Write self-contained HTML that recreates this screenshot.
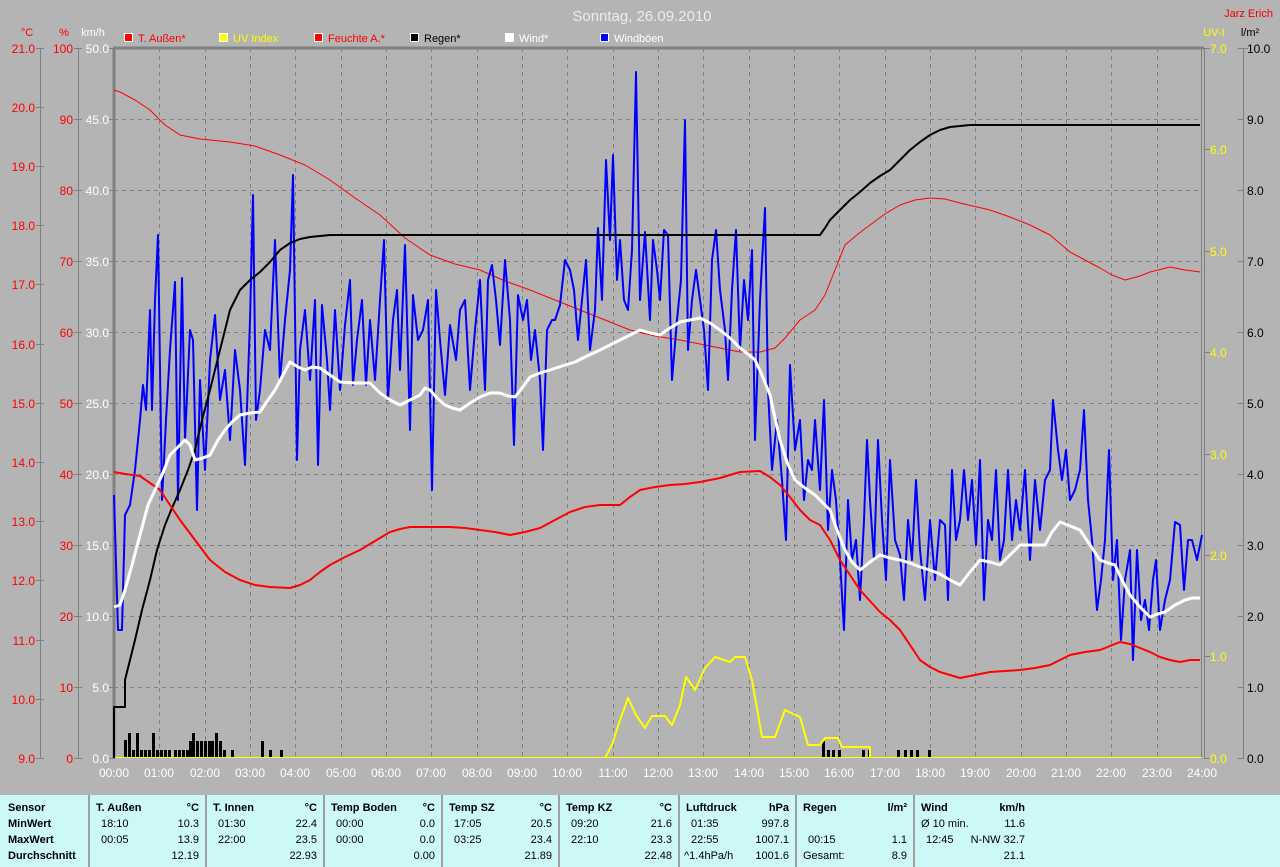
<!DOCTYPE html>
<html><head><meta charset="utf-8"><style>
body{margin:0;width:1280px;height:867px;background:#b4b4b4;overflow:hidden;font-family:"Liberation Sans",Arial,sans-serif;position:relative}
svg{position:absolute;left:0;top:0}
#tbl{position:absolute;left:0;top:795px;width:1280px;height:72px;background:#ccf8f8;font-size:11px;color:#000}
.c{position:absolute;top:0;height:72px;border-left:2px solid #a0a0a0}
.t{position:absolute;white-space:nowrap}
.b{font-weight:bold}
.r{text-align:right}
</style></head><body>
<svg width="1280" height="795" font-family="Liberation Sans, Arial, sans-serif" font-size="12">
<text x="642" y="21" fill="#ececec" font-size="15" text-anchor="middle">Sonntag, 26.09.2010</text>
<text x="1273" y="17" fill="#f00000" font-size="11" text-anchor="end">Jarz Erich</text>
<g font-size="11">
<rect x="124.5" y="33.5" width="8" height="8" fill="#f00" stroke="#fff"/><text x="138" y="42" fill="#f00">T. Außen*</text>
<rect x="219.5" y="33.5" width="8" height="8" fill="#ff0" stroke="#fff"/><text x="233" y="42" fill="#ff0">UV Index</text>
<rect x="314.5" y="33.5" width="8" height="8" fill="#f00" stroke="#fff"/><text x="328" y="42" fill="#f00">Feuchte A.*</text>
<rect x="410.5" y="33.5" width="8" height="8" fill="#000" stroke="#fff"/><text x="424" y="42" fill="#000">Regen*</text>
<rect x="505.5" y="33.5" width="8" height="8" fill="#fff" stroke="#fff"/><text x="519" y="42" fill="#fff">Wind*</text>
<rect x="600.5" y="33.5" width="8" height="8" fill="#00f" stroke="#fff"/><text x="614" y="42" fill="#fff">Windböen</text>
<text x="27" y="36" fill="#f00" text-anchor="middle">°C</text>
<text x="64" y="36" fill="#f00" text-anchor="middle">%</text>
<text x="93" y="36" fill="#fff" text-anchor="middle">km/h</text>
<text x="1214" y="36" fill="#ff0" text-anchor="middle">UV-I</text>
<text x="1250" y="36" fill="#000" text-anchor="middle">l/m²</text>
</g>
<g stroke="#808080" stroke-dasharray="4,4" stroke-width="1">
<path d="M114 119.5H1202M114 190.5H1202M114 261.5H1202M114 332.5H1202M114 403.5H1202M114 474.5H1202M114 545.5H1202M114 616.5H1202M114 687.5H1202"/>
<path d="M159.5 48V758M205.5 48V758M250.5 48V758M295.5 48V758M341.5 48V758M386.5 48V758M431.5 48V758M477.5 48V758M522.5 48V758M567.5 48V758M613.5 48V758M658.5 48V758M703.5 48V758M749.5 48V758M794.5 48V758M839.5 48V758M885.5 48V758M930.5 48V758M975.5 48V758M1021.5 48V758M1066.5 48V758M1111.5 48V758M1157.5 48V758"/>
</g>
<g stroke="#808080" fill="none">
<path d="M113 48H1204M114 48V759" stroke-width="3"/>
<path d="M1201.5 48V759M1204.5 48V759" stroke-width="1"/>
<path d="M40.5 48V758M78.5 48V758M1243.5 48V758"/>
<path d="M36 48.5h8M36 107.5h8M36 166.5h8M36 225.5h8M36 284.5h8M36 344.5h8M36 403.5h8M36 462.5h8M36 521.5h8M36 580.5h8M36 640.5h8M36 699.5h8M36 758.5h8"/>
<path d="M74 48.5h8M74 119.5h8M74 190.5h8M74 261.5h8M74 332.5h8M74 403.5h8M74 474.5h8M74 545.5h8M74 616.5h8M74 687.5h8M74 758.5h8"/>
<path d="M109 48.5h5M109 119.5h5M109 190.5h5M109 261.5h5M109 332.5h5M109 403.5h5M109 474.5h5M109 545.5h5M109 616.5h5M109 687.5h5M109 758.5h5"/>
<path d="M1204 48.5h6M1204 149.5h6M1204 251.5h6M1204 352.5h6M1204 454.5h6M1204 555.5h6M1204 656.5h6M1204 758.5h6"/>
<path d="M1238 48.5h10M1238 119.5h6M1238 190.5h6M1238 261.5h6M1238 332.5h6M1238 403.5h6M1238 474.5h6M1238 545.5h6M1238 616.5h6M1238 687.5h6M1238 758.5h6"/>
</g>
<g font-size="12" text-anchor="end" fill="#f00">
<text x="35" y="53">21.0</text><text x="35" y="112">20.0</text><text x="35" y="171">19.0</text><text x="35" y="230">18.0</text><text x="35" y="289">17.0</text><text x="35" y="349">16.0</text><text x="35" y="408">15.0</text><text x="35" y="467">14.0</text><text x="35" y="526">13.0</text><text x="35" y="585">12.0</text><text x="35" y="645">11.0</text><text x="35" y="704">10.0</text><text x="35" y="763">9.0</text>
<text x="73" y="53">100</text><text x="73" y="124">90</text><text x="73" y="195">80</text><text x="73" y="266">70</text><text x="73" y="337">60</text><text x="73" y="408">50</text><text x="73" y="479">40</text><text x="73" y="550">30</text><text x="73" y="621">20</text><text x="73" y="692">10</text><text x="73" y="763">0</text>
</g>
<g font-size="12" text-anchor="end" fill="#fff">
<text x="109" y="53">50.0</text><text x="109" y="124">45.0</text><text x="109" y="195">40.0</text><text x="109" y="266">35.0</text><text x="109" y="337">30.0</text><text x="109" y="408">25.0</text><text x="109" y="479">20.0</text><text x="109" y="550">15.0</text><text x="109" y="621">10.0</text><text x="109" y="692">5.0</text><text x="109" y="763">0.0</text>
</g>
<g font-size="12" fill="#ff0">
<text x="1210" y="53">7.0</text><text x="1210" y="154">6.0</text><text x="1210" y="256">5.0</text><text x="1210" y="357">4.0</text><text x="1210" y="459">3.0</text><text x="1210" y="560">2.0</text><text x="1210" y="661">1.0</text><text x="1210" y="763">0.0</text>
</g>
<g font-size="12" fill="#000">
<text x="1247" y="53">10.0</text><text x="1247" y="124">9.0</text><text x="1247" y="195">8.0</text><text x="1247" y="266">7.0</text><text x="1247" y="337">6.0</text><text x="1247" y="408">5.0</text><text x="1247" y="479">4.0</text><text x="1247" y="550">3.0</text><text x="1247" y="621">2.0</text><text x="1247" y="692">1.0</text><text x="1247" y="763">0.0</text>
</g>
<g font-size="12" fill="#fff" text-anchor="middle">
<text x="114" y="777">00:00</text><text x="159" y="777">01:00</text><text x="205" y="777">02:00</text><text x="250" y="777">03:00</text><text x="295" y="777">04:00</text><text x="341" y="777">05:00</text><text x="386" y="777">06:00</text><text x="431" y="777">07:00</text><text x="477" y="777">08:00</text><text x="522" y="777">09:00</text><text x="567" y="777">10:00</text><text x="613" y="777">11:00</text><text x="658" y="777">12:00</text><text x="703" y="777">13:00</text><text x="749" y="777">14:00</text><text x="794" y="777">15:00</text><text x="839" y="777">16:00</text><text x="885" y="777">17:00</text><text x="930" y="777">18:00</text><text x="975" y="777">19:00</text><text x="1021" y="777">20:00</text><text x="1066" y="777">21:00</text><text x="1111" y="777">22:00</text><text x="1157" y="777">23:00</text><text x="1202" y="777">24:00</text>
</g>
<g fill="#000">
<rect x="124" y="740" width="3" height="18"/><rect x="128" y="733" width="3" height="25"/><rect x="132" y="750" width="3" height="8"/><rect x="136" y="733" width="3" height="25"/><rect x="140" y="750" width="3" height="8"/><rect x="144" y="750" width="3" height="8"/><rect x="148" y="750" width="3" height="8"/><rect x="152" y="733" width="3" height="25"/><rect x="156" y="750" width="3" height="8"/><rect x="160" y="750" width="3" height="8"/><rect x="164" y="750" width="3" height="8"/><rect x="168" y="750" width="3" height="8"/><rect x="174" y="750" width="3" height="8"/><rect x="178" y="750" width="3" height="8"/><rect x="182" y="750" width="3" height="8"/><rect x="186" y="750" width="3" height="8"/><rect x="189" y="741" width="3" height="17"/><rect x="192" y="733" width="3" height="25"/><rect x="196" y="741" width="3" height="17"/><rect x="200" y="741" width="3" height="17"/><rect x="204" y="741" width="3" height="17"/><rect x="208" y="741" width="3" height="17"/><rect x="211" y="741" width="3" height="17"/><rect x="215" y="733" width="3" height="25"/><rect x="219" y="741" width="3" height="17"/><rect x="223" y="750" width="3" height="8"/><rect x="231" y="750" width="3" height="8"/><rect x="261" y="741" width="3" height="17"/><rect x="269" y="750" width="3" height="8"/><rect x="280" y="750" width="3" height="8"/>
<rect x="822" y="741" width="3" height="17"/><rect x="827" y="750" width="3" height="8"/><rect x="832" y="750" width="3" height="8"/><rect x="838" y="750" width="3" height="8"/><rect x="862" y="750" width="3" height="8"/><rect x="868" y="750" width="3" height="8"/><rect x="897" y="750" width="3" height="8"/><rect x="904" y="750" width="3" height="8"/><rect x="910" y="750" width="3" height="8"/><rect x="916" y="750" width="3" height="8"/><rect x="928" y="750" width="3" height="8"/>
</g>
<path d="M114 757.5H1202" stroke="#ff0" stroke-width="1"/>
<g fill="none" stroke-linejoin="round">
<polyline stroke="#f00" stroke-width="1" points="114,90 120,92 135,100 150,110 165,125 180,135 200,139 230,142 255,146 280,155 305,165 330,180 355,198 380,215 405,238 430,255 455,264 480,270 505,281 530,290 555,300 580,310 605,320 630,330 655,336 680,340 700,344 720,348 740,352 760,352 775,348 785,338 800,320 815,310 825,295 835,270 845,245 858,234 870,225 885,214 900,205 915,200 930,198 945,199 960,203 990,210 1010,217 1030,225 1050,235 1070,252 1085,260 1100,268 1112,275 1125,280 1140,276 1150,272 1170,267 1185,270 1200,272"/>
<polyline stroke="#ff0" stroke-width="2" points="605,758 612,745 620,720 628,698 636,715 645,728 652,716 665,716 672,725 680,705 686,677 695,690 705,668 715,657 730,662 735,657 745,657 752,680 762,737 775,737 785,710 800,717 808,745 820,745 825,738 838,738 842,747 870,747 870,758"/>
<polyline stroke="#00f" stroke-width="2" points="114,495 118,630 122,630 125,515 130,505 135,470 140,420 143,385 146,410 150,310 152,410 155,300 158,235 162,500 166,420 170,350 175,282 178,500 182,278 185,440 190,330 193,340 197,510 200,380 205,470 210,360 215,315 220,400 225,370 230,440 235,350 240,390 245,465 250,320 253,195 256,420 260,390 265,330 270,350 275,240 280,380 285,320 290,270 293,175 297,460 300,350 305,310 310,380 315,300 318,465 322,305 327,360 330,410 335,310 340,390 345,325 350,280 353,385 357,340 362,300 366,385 370,320 375,380 380,300 384,240 388,400 393,320 397,290 400,370 405,245 410,430 413,295 418,340 423,330 428,300 432,490 436,290 440,340 445,395 450,325 456,360 460,310 465,300 470,390 475,330 480,280 485,390 488,280 492,265 496,300 500,345 505,260 510,320 514,445 518,295 523,320 527,300 531,360 535,330 540,380 543,450 547,330 552,320 555,320 560,305 565,260 570,270 574,290 578,340 582,300 586,260 590,350 595,310 598,228 602,300 606,160 610,240 613,155 617,280 620,240 624,300 628,310 632,250 636,72 640,300 645,232 650,320 653,240 657,270 660,300 664,230 668,235 672,380 677,320 681,280 685,120 688,350 692,300 696,270 700,300 704,330 708,390 712,260 716,230 720,290 725,330 728,380 732,290 736,230 740,350 744,280 748,320 752,250 755,440 760,300 765,208 768,390 772,470 777,420 782,480 786,540 790,365 795,450 800,420 804,500 808,460 812,470 815,420 820,490 824,400 828,530 832,470 836,500 840,560 844,630 848,500 852,560 856,540 860,600 864,520 867,440 870,500 874,560 878,440 882,520 886,580 890,460 895,540 900,555 904,600 908,520 912,560 916,480 920,550 925,600 930,520 935,580 940,520 945,525 948,600 952,470 956,540 960,520 964,470 968,520 972,480 976,545 980,460 984,600 988,520 992,540 996,470 1000,560 1004,540 1008,470 1012,540 1016,500 1020,530 1025,470 1030,560 1035,480 1040,530 1045,480 1050,470 1053,400 1058,450 1062,480 1066,450 1070,500 1075,490 1080,470 1084,410 1088,500 1092,540 1097,610 1101,580 1105,540 1109,450 1113,580 1117,540 1121,640 1125,580 1130,550 1133,660 1137,550 1141,620 1145,600 1149,630 1153,580 1156,560 1160,630 1165,600 1170,580 1175,522 1180,525 1184,590 1188,540 1192,540 1197,560 1202,535"/>
<polyline stroke="#000" stroke-width="2" points="114,758 114,707 125,707 125,680 130,660 135,640 142,610 150,580 157,550 165,525 172,508 180,490 188,470 195,450 202,420 210,390 220,350 230,310 240,290 250,280 260,272 270,262 280,250 290,243 300,239 310,237 330,235 340,235 820,235 825,228 830,220 840,210 850,200 860,192 870,183 880,176 890,170 900,160 910,150 920,142 930,135 940,130 950,127 960,126 970,125 1200,125"/>
<polyline stroke="#f00" stroke-width="2" points="114,472 125,474 140,476 150,483 160,490 170,505 180,520 195,540 210,560 225,572 240,580 255,585 270,587 290,588 300,585 310,580 320,572 330,565 345,557 360,550 375,541 390,532 400,529 410,527 430,527 450,527 465,528 480,530 495,532 510,535 525,532 540,528 555,520 570,512 585,507 600,505 620,505 630,497 640,490 655,487 670,485 685,484 700,482 720,478 740,472 760,471 770,477 780,485 790,497 800,510 810,520 820,525 830,540 840,560 850,575 860,590 870,601 880,612 890,620 900,630 910,645 920,660 930,667 940,672 950,675 960,678 975,675 990,672 1005,671 1020,670 1035,668 1050,665 1060,660 1070,655 1085,652 1100,650 1110,646 1120,642 1130,644 1140,648 1150,652 1160,657 1170,660 1180,662 1190,660 1200,660"/>
<polyline stroke="#fff" stroke-width="3" points="114,607 120,605 125,590 132,565 140,535 148,505 155,490 162,475 170,455 178,447 185,440 190,445 195,460 203,458 210,455 218,440 225,430 232,422 240,415 250,413 260,412 268,400 275,390 283,375 290,362 298,367 305,370 312,367 320,368 330,375 340,382 355,383 370,383 375,388 380,393 390,400 400,405 410,400 420,395 425,388 430,390 437,398 445,405 452,408 460,410 470,403 480,397 490,393 500,393 508,396 515,397 522,388 530,377 540,373 550,370 562,366 575,362 587,356 600,350 610,345 620,340 630,335 640,330 650,333 660,335 670,328 680,322 690,320 700,318 710,323 720,330 730,338 740,348 748,354 755,360 762,375 770,395 775,418 780,440 787,462 795,480 805,488 815,495 822,502 830,510 837,530 845,550 852,562 860,570 870,562 880,555 890,558 900,560 910,563 920,567 930,570 940,574 950,580 960,585 970,572 980,560 990,562 1000,565 1010,555 1020,545 1032,545 1045,545 1052,532 1060,522 1070,526 1080,530 1090,545 1100,560 1108,563 1115,565 1122,580 1130,595 1140,607 1150,617 1158,614 1165,612 1175,605 1185,600 1192,598 1200,598"/>
</g>
</svg>
<div id="tbl">
<div class="t b" style="left:8px;top:7px">Sensor</div>
<div class="t b" style="left:8px;top:23px">MinWert</div>
<div class="t b" style="left:8px;top:39px">MaxWert</div>
<div class="t b" style="left:8px;top:55px">Durchschnitt</div>

<div class="c" style="left:88px;width:115px">
<div class="t b" style="left:6px;top:7px">T. Außen</div><div class="t b" style="right:6px;top:7px">°C</div>
<div class="t" style="left:11px;top:23px">18:10</div><div class="t" style="right:6px;top:23px">10.3</div>
<div class="t" style="left:11px;top:39px">00:05</div><div class="t" style="right:6px;top:39px">13.9</div>
<div class="t" style="right:6px;top:55px">12.19</div></div>

<div class="c" style="left:205px;width:116px">
<div class="t b" style="left:6px;top:7px">T. Innen</div><div class="t b" style="right:6px;top:7px">°C</div>
<div class="t" style="left:11px;top:23px">01:30</div><div class="t" style="right:6px;top:23px">22.4</div>
<div class="t" style="left:11px;top:39px">22:00</div><div class="t" style="right:6px;top:39px">23.5</div>
<div class="t" style="right:6px;top:55px">22.93</div></div>

<div class="c" style="left:323px;width:116px">
<div class="t b" style="left:6px;top:7px">Temp Boden</div><div class="t b" style="right:6px;top:7px">°C</div>
<div class="t" style="left:11px;top:23px">00:00</div><div class="t" style="right:6px;top:23px">0.0</div>
<div class="t" style="left:11px;top:39px">00:00</div><div class="t" style="right:6px;top:39px">0.0</div>
<div class="t" style="right:6px;top:55px">0.00</div></div>

<div class="c" style="left:441px;width:115px">
<div class="t b" style="left:6px;top:7px">Temp SZ</div><div class="t b" style="right:6px;top:7px">°C</div>
<div class="t" style="left:11px;top:23px">17:05</div><div class="t" style="right:6px;top:23px">20.5</div>
<div class="t" style="left:11px;top:39px">03:25</div><div class="t" style="right:6px;top:39px">23.4</div>
<div class="t" style="right:6px;top:55px">21.89</div></div>

<div class="c" style="left:558px;width:118px">
<div class="t b" style="left:6px;top:7px">Temp KZ</div><div class="t b" style="right:6px;top:7px">°C</div>
<div class="t" style="left:11px;top:23px">09:20</div><div class="t" style="right:6px;top:23px">21.6</div>
<div class="t" style="left:11px;top:39px">22:10</div><div class="t" style="right:6px;top:39px">23.3</div>
<div class="t" style="right:6px;top:55px">22.48</div></div>

<div class="c" style="left:678px;width:115px">
<div class="t b" style="left:6px;top:7px">Luftdruck</div><div class="t b" style="right:6px;top:7px">hPa</div>
<div class="t" style="left:11px;top:23px">01:35</div><div class="t" style="right:6px;top:23px">997.8</div>
<div class="t" style="left:11px;top:39px">22:55</div><div class="t" style="right:6px;top:39px">1007.1</div>
<div class="t" style="left:4px;top:55px">^1.4hPa/h</div><div class="t" style="right:6px;top:55px">1001.6</div></div>

<div class="c" style="left:795px;width:116px">
<div class="t b" style="left:6px;top:7px">Regen</div><div class="t b" style="right:6px;top:7px">l/m²</div>
<div class="t" style="left:11px;top:39px">00:15</div><div class="t" style="right:6px;top:39px">1.1</div>
<div class="t" style="left:6px;top:55px">Gesamt:</div><div class="t" style="right:6px;top:55px">8.9</div></div>

<div class="c" style="left:913px;width:110px">
<div class="t b" style="left:6px;top:7px">Wind</div><div class="t b" style="right:0px;top:7px">km/h</div>
<div class="t" style="left:6px;top:23px">Ø 10 min.</div><div class="t" style="right:0px;top:23px">11.6</div>
<div class="t" style="left:11px;top:39px">12:45</div><div class="t" style="right:0px;top:39px">N-NW 32.7</div>
<div class="t" style="right:0px;top:55px">21.1</div></div>
</div>
</body></html>
